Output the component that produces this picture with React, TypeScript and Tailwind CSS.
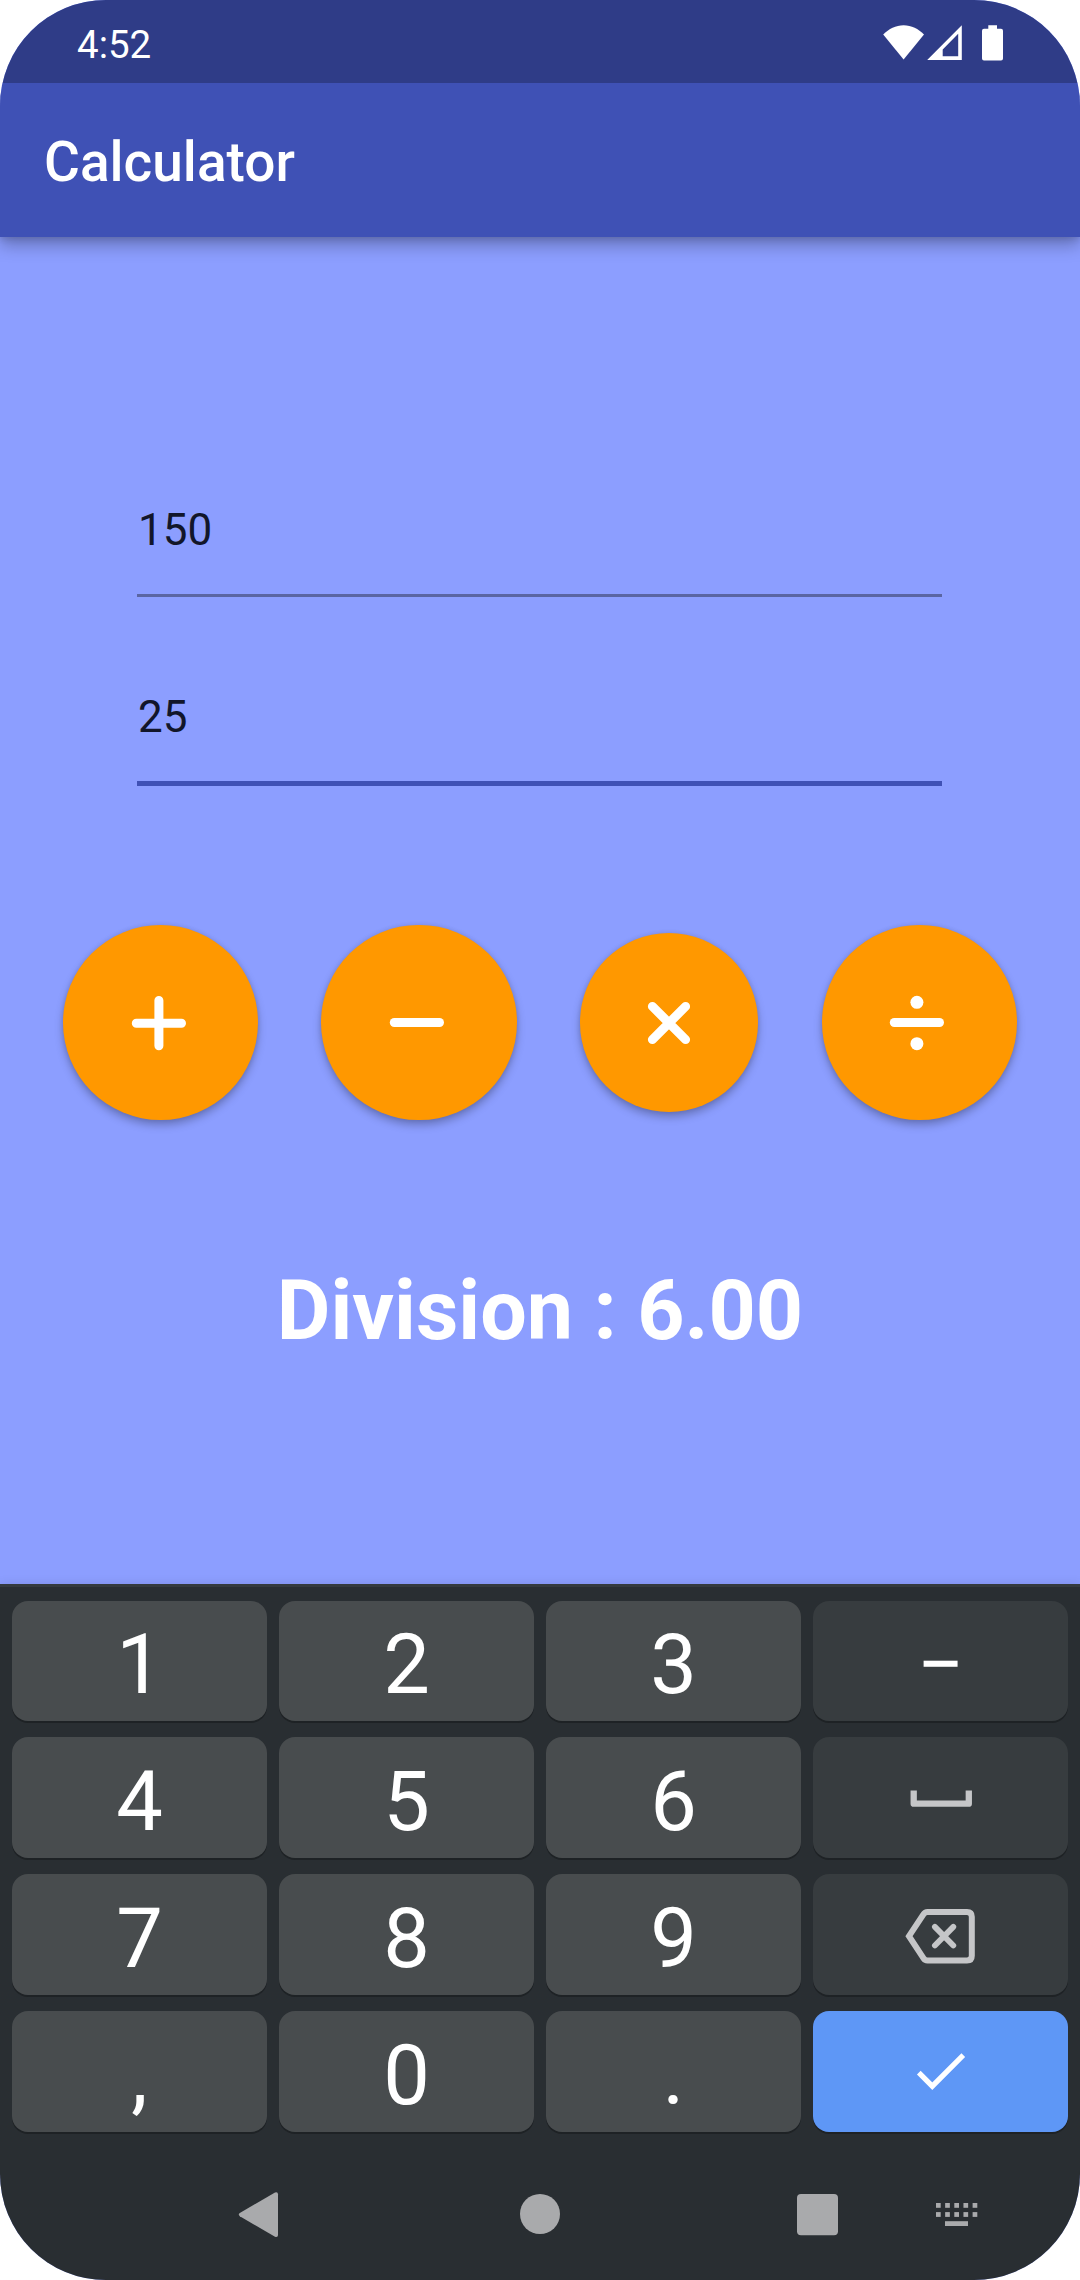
import type { ReactNode } from "react";

function WifiIcon() {
  return (
    <svg className="block" width="42" height="36" viewBox="0 0 42 36" fill="#fff">
      <path d="M20.600 34.600 0.200 9.600C5.800 3.900 12.800 0.300 20.600 0.300S35.400 3.900 41 9.600Z" />
    </svg>
  );
}

function SignalIcon() {
  return (
    <svg className="block" width="36" height="36" viewBox="0 0 36 36" fill="#fff" fillRule="evenodd">
      <path d="M0.200 35 34.800 0.300V35ZM15.700 24.400V31.300H31.200V8.800Z" />
    </svg>
  );
}

function BatteryIcon() {
  return (
    <svg className="block" width="21" height="36" viewBox="0 0 21 36" fill="#fff">
      <path d="M6.300 0.300H15V3.700H19Q21 3.700 21 5.700V33.600Q21 35.600 19 35.600H2Q0 35.600 0 33.600V5.700Q0 3.700 2 3.700H6.300Z" />
    </svg>
  );
}

function StatusBar() {
  return (
    <div className="relative z-10 flex h-[83px] items-start justify-between bg-[#2f3c87] pl-[77px] pr-[77px] text-white">
      <span className="mt-[22px] text-[38.500px] leading-[46px]">4:52</span>
      <div className="mt-[25px] flex">
        <WifiIcon />
        <div className="ml-[2px]">
          <SignalIcon />
        </div>
        <div className="ml-[19px]">
          <BatteryIcon />
        </div>
      </div>
    </div>
  );
}

function PlusIcon() {
  return (
    <svg className="-ml-[4px] block" width="56" height="56" viewBox="-28 -28 56 56" stroke="#fff" strokeWidth="9" strokeLinecap="round">
      <path d="M-22.700 0.200H22.500M-0.100 -22.500V22.700" />
    </svg>
  );
}

function MinusIcon() {
  return (
    <svg className="-ml-[4px] block" width="56" height="56" viewBox="-28 -28 56 56" stroke="#fff" strokeWidth="9" strokeLinecap="round">
      <path d="M-22.700 -0.500H22.500" />
    </svg>
  );
}

function TimesIcon() {
  return (
    <svg className="block" width="56" height="56" viewBox="-28 -28 56 56" stroke="#fff" strokeWidth="9" strokeLinecap="round">
      <path d="M-16.600 -16.600 16.600 16.600M16.600 -16.600 -16.600 16.600" />
    </svg>
  );
}

function DivideIcon() {
  return (
    <svg className="-ml-[4px] block" width="56" height="56" viewBox="-28 -28 56 56">
      <path d="M-22.700 -0.500H22.500" stroke="#fff" strokeWidth="9" strokeLinecap="round" />
      <circle cx="-0.100" cy="-20.700" r="6.500" fill="#fff" />
      <circle cx="-0.100" cy="20.700" r="6.500" fill="#fff" />
    </svg>
  );
}

function OperatorButton({ label, small, children }: { label: string; small?: boolean; children: ReactNode }) {
  return (
    <button
      aria-label={label}
      className={
        (small ? "size-[178.600px]" : "size-[195.300px]") +
        " flex items-center justify-center rounded-full bg-[#ff9800] shadow-[0_5px_8px_rgba(0,0,0,0.26),0_0_4px_rgba(0,0,0,0.1)]"
      }
    >
      {children}
    </button>
  );
}

function SpaceIcon() {
  return (
    <svg className="mt-[3px] block" width="64" height="20" viewBox="0 0 64 20" fill="none" stroke="#c5c6c8" strokeWidth="6.300" strokeLinejoin="round">
      <path d="M4.700 1.500V14.700H59.800V1.500" />
    </svg>
  );
}

function BackspaceIcon() {
  return (
    <svg className="-ml-[2px] mt-[3px] block" width="72" height="58" viewBox="0 0 72 58" fill="none" stroke="#c5c6c8" strokeWidth="6">
      <path d="M5 29.200 19.400 7.300Q20.900 4.900 23.500 4.900H63Q67.800 4.900 67.800 9.700V48.700Q67.800 53.500 63 53.500H23.500Q20.900 53.500 19.400 51.100Z" />
      <path d="M30.900 19.900 49.300 38.500M49.300 19.900 30.900 38.500" strokeWidth="5.800" strokeLinecap="round" />
    </svg>
  );
}

function CheckIcon() {
  return (
    <svg className="block" width="50" height="40" viewBox="0 0 50 40" fill="none" stroke="#fff" strokeWidth="5.200">
      <path d="M2.800 20.700 16.300 34.200 47.300 3.200" />
    </svg>
  );
}

function Key({ children, tone = "digit" }: { children: ReactNode; tone?: "digit" | "action" | "enter" }) {
  const tones = {
    digit: "bg-[#484c4e]",
    action: "bg-[#373c3f]",
    enter: "bg-[#5e97f6]",
  };
  return (
    <button
      className={
        "flex items-center justify-center rounded-[16px] text-[83px] leading-[97px] text-white shadow-[0_2px_0_#1e2225] " +
        tones[tone]
      }
    >
      {children}
    </button>
  );
}

function Digit({ children }: { children: ReactNode }) {
  return <span className="mt-[7px]">{children}</span>;
}

function Keyboard() {
  return (
    <div className="grid h-[548px] grid-cols-4 grid-rows-[120px_121px_121px_121px] gap-x-[12px] gap-y-[16px] border-t-[3px] border-[#343a3e] px-[12px] pt-[14px]">
      <Key><Digit>1</Digit></Key>
      <Key><Digit>2</Digit></Key>
      <Key><Digit>3</Digit></Key>
      <Key tone="action"><Digit>−</Digit></Key>
      <Key><Digit>4</Digit></Key>
      <Key><Digit>5</Digit></Key>
      <Key><Digit>6</Digit></Key>
      <Key tone="action"><SpaceIcon /></Key>
      <Key><Digit>7</Digit></Key>
      <Key><Digit>8</Digit></Key>
      <Key><Digit>9</Digit></Key>
      <Key tone="action"><BackspaceIcon /></Key>
      <Key><Digit>,</Digit></Key>
      <Key><Digit>0</Digit></Key>
      <Key><Digit>.</Digit></Key>
      <Key tone="enter"><CheckIcon /></Key>
    </div>
  );
}

function NavBar() {
  const columns = [0, 1, 2, 3, 4];
  return (
    <div className="flex h-[148px] items-start pl-[238px] pt-[60px]">
      <svg className="block" width="41" height="46" viewBox="0 0 41 46" fill="#a9aaac">
        <path d="M37 0.500 1.800 21Q-0.300 22.600 1.800 24.200L37 44.700Q40 45.600 40 43V2.200Q40 -0.400 37 0.500Z" />
      </svg>
      <svg className="ml-[240px] block" width="42" height="46" viewBox="0 0 42 46" fill="#a9aaac">
        <circle cx="21" cy="22" r="20" />
      </svg>
      <svg className="ml-[235px] block" width="43" height="46" viewBox="0 0 43 46" fill="#a9aaac">
        <rect x="1" y="2" width="41" height="41.300" rx="4" />
      </svg>
      <svg className="ml-[96px] block" width="44" height="46" viewBox="0 0 44 46" fill="#a9aaac">
        {columns.map((c) => (
          <g key={c}>
            <rect x={1 + c * 9.15} y="11" width="4.700" height="4.800" />
            <rect x={1 + c * 9.15} y="20.100" width="4.700" height="4.800" />
          </g>
        ))}
        <rect x="10" y="29.200" width="23" height="4.800" />
      </svg>
    </div>
  );
}

export default function App() {
  return (
    <div className="h-[2280px] w-[1080px] bg-white font-['Roboto',sans-serif]">
      <div className="flex h-full flex-col overflow-hidden rounded-[106px] bg-[#8c9eff]">
        <StatusBar />
        <header className="relative h-[154px] bg-[#3f51b5] pl-[44px] pt-[47px] shadow-[0_8px_16px_rgba(0,0,0,0.28),0_2px_6px_rgba(0,0,0,0.12)]">
          <h1 className="text-[55px] font-medium leading-[64px] text-white">Calculator</h1>
        </header>

        <main className="flex h-[1347px] flex-col">
          <div className="ml-[137px] mr-[138px] mt-[266px] flex flex-col text-[44px] leading-[52px] text-[#12162a]">
            <div className="h-[94.400px] border-b-[3px] border-[#5a65a2] pl-[1px] pt-[1px]">150</div>
            <div className="mt-[92.600px] h-[96px] border-b-[5px] border-[#3f51b5] pl-[1px] pt-[1px]">25</div>
          </div>

          <div className="mt-[139px] flex items-center justify-evenly">
            <OperatorButton label="Add"><PlusIcon /></OperatorButton>
            <OperatorButton label="Subtract"><MinusIcon /></OperatorButton>
            <OperatorButton label="Multiply" small><TimesIcon /></OperatorButton>
            <OperatorButton label="Divide"><DivideIcon /></OperatorButton>
          </div>

          <p className="mt-[145px] text-center text-[82.500px] font-bold leading-[92px] text-white">
            Division : 6.00
          </p>
        </main>

        <div className="relative flex-1 bg-[#292e32] shadow-[0_0_10px_rgba(0,0,0,0.1)]">
          <Keyboard />
          <NavBar />
        </div>
      </div>
    </div>
  );
}
